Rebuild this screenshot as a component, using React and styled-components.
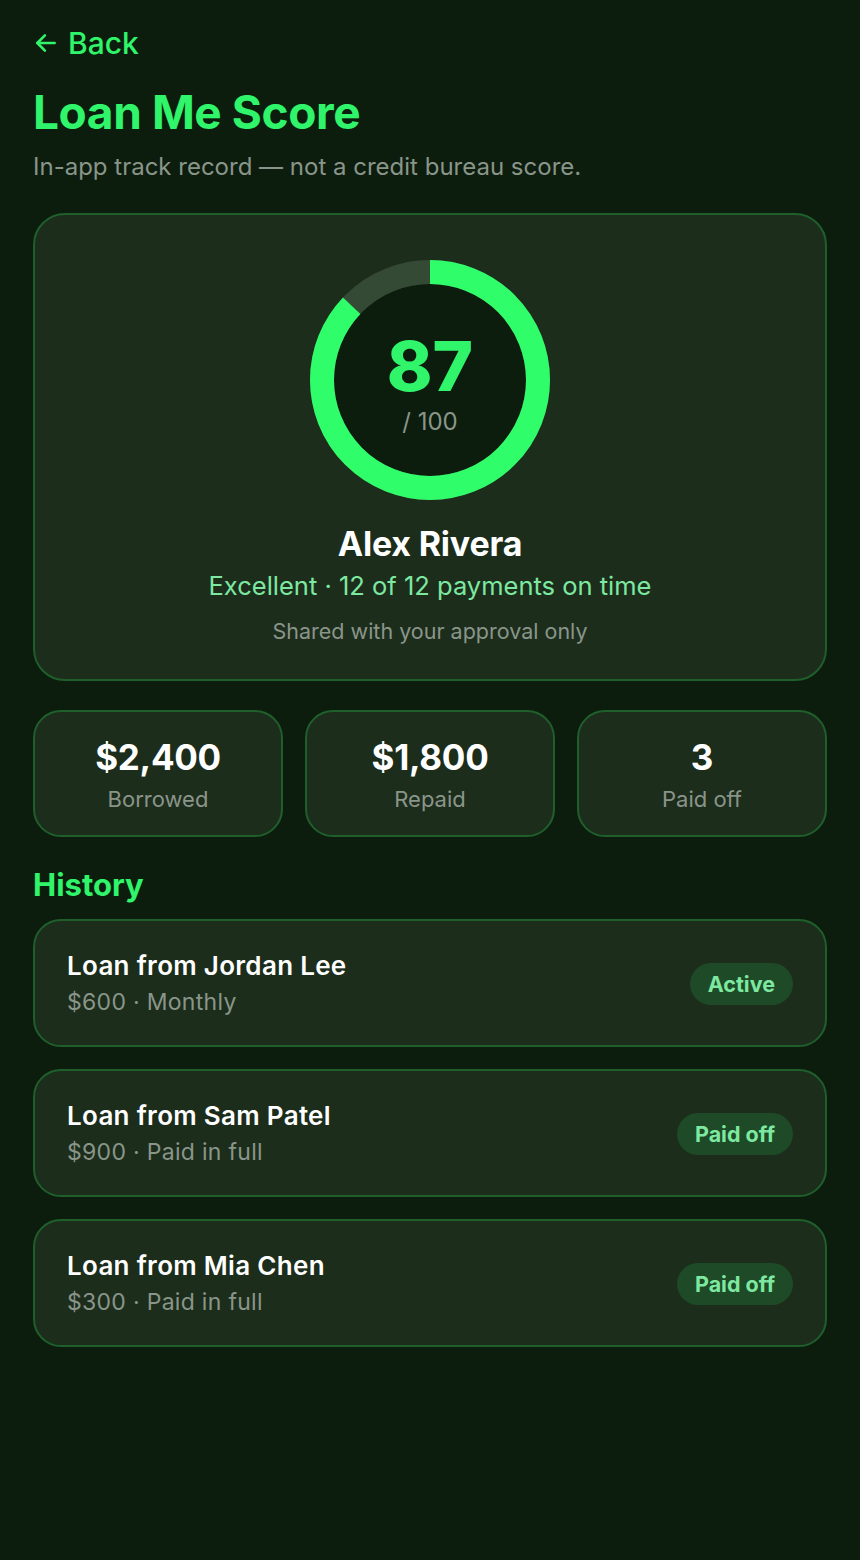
import React from "react";
import styled, { createGlobalStyle } from "styled-components";

const GlobalStyle = createGlobalStyle`
  html, body { margin: 0; padding: 0; background: #0c1d0e; }
  body { font-family: Inter, "Noto Sans", sans-serif; -webkit-font-smoothing: antialiased; }
  * { box-sizing: border-box; }
`;

const Page = styled.div`
  min-height: 1560px;
  background: #0c1d0e;
  padding: 26px 33px 40px;
  display: flex;
  flex-direction: column;
`;

const BackLink = styled.a`
  display: flex;
  align-items: center;
  gap: 9px;
  color: #30f46a;
  font-size: 30px;
  font-weight: 500;
  text-decoration: none;
  height: 34px;
`;

const Title = styled.h1`
  margin: 24px 0 0;
  color: #30f46a;
  font-size: 46px;
  font-weight: 700;
  letter-spacing: -0.4px;
  line-height: 56px;
`;

const Subtitle = styled.p`
  margin: 12px 0 0;
  color: #8a958a;
  font-size: 24px;
  line-height: 30px;
`;

const Card = styled.div`
  background: #1c2d1c;
  border: 2px solid #1f5f2b;
  border-radius: 32px;
`;

const ScoreCard = styled(Card)`
  margin-top: 31px;
  padding: 45px 24px 34px;
  display: flex;
  flex-direction: column;
  align-items: center;
`;

const RingWrap = styled.div`
  position: relative;
  width: 240px;
  height: 240px;
`;

const RingCenter = styled.div`
  position: absolute;
  inset: 0;
  display: flex;
  flex-direction: column;
  align-items: center;
  justify-content: center;
`;

const ScoreNum = styled.div`
  color: #30f46a;
  font-size: 69px;
  font-weight: 800;
  line-height: 84px;
`;

const ScoreMax = styled.div`
  color: #8a958a;
  font-size: 24px;
  line-height: 28px;
`;

const Name = styled.div`
  margin-top: 24px;
  color: #ffffff;
  font-size: 34px;
  font-weight: 700;
  letter-spacing: -0.2px;
  line-height: 40px;
`;

const Status = styled.div`
  margin-top: 5px;
  color: #7de8a0;
  font-size: 25.5px;
  line-height: 34px;
`;

const Note = styled.div`
  margin-top: 14px;
  color: #8a958a;
  font-size: 21.5px;
  line-height: 28px;
`;

const StatsRow = styled.div`
  margin-top: 29px;
  display: grid;
  grid-template-columns: repeat(3, 1fr);
  gap: 22px;
`;

const StatCard = styled(Card)`
  height: 127px;
  border-radius: 28px;
  display: flex;
  flex-direction: column;
  align-items: center;
  justify-content: center;
  padding-top: 2px;
`;

const StatValue = styled.div`
  color: #ffffff;
  font-size: 35px;
  font-weight: 700;
  line-height: 42px;
  letter-spacing: -0.3px;
`;

const StatLabel = styled.div`
  margin-top: 6px;
  color: #8a958a;
  font-size: 22px;
  line-height: 30px;
`;

const SectionTitle = styled.h2`
  margin: 28px 0 0;
  color: #30f46a;
  font-size: 31px;
  font-weight: 700;
  line-height: 40px;
`;

const List = styled.div`
  margin-top: 14px;
  display: flex;
  flex-direction: column;
  gap: 22px;
`;

const Row = styled(Card)`
  height: 128px;
  flex: 0 0 128px;
  border-radius: 28px;
  padding: 0 32px;
  display: flex;
  align-items: center;
  justify-content: space-between;
`;

const RowText = styled.div`
  display: flex;
  flex-direction: column;
  gap: 5px;
`;

const RowTitle = styled.div`
  color: #ffffff;
  font-size: 26px;
  font-weight: 600;
  letter-spacing: 0.3px;
  line-height: 32px;
`;

const RowSub = styled.div`
  color: #8a958a;
  font-size: 23px;
  letter-spacing: 0.3px;
  line-height: 30px;
`;

const Badge = styled.span`
  background: #1e4a27;
  color: #7de8a0;
  font-size: 21.5px;
  font-weight: 700;
  padding: 0 18px;
  height: 42px;
  border-radius: 21px;
  display: inline-flex;
  align-items: center;
  margin-top: 2px;
`;

function Ring({ value }) {
  const r = 108;
  const c = 2 * Math.PI * r;
  return (
    <svg width="240" height="240" viewBox="0 0 240 240">
      <circle cx="120" cy="120" r="96" fill="#0c1d0e" />
      <circle cx="120" cy="120" r={r} fill="none" stroke="#354a35" strokeWidth="24" />
      <circle
        cx="120"
        cy="120"
        r={r}
        fill="none"
        stroke="#30fd6a"
        strokeWidth="24"
        strokeDasharray={`${(c * value) / 100} ${c}`}
        transform="rotate(-90 120 120)"
      />
    </svg>
  );
}

const loans = [
  { title: "Loan from Jordan Lee", sub: "$600 · Monthly", badge: "Active" },
  { title: "Loan from Sam Patel", sub: "$900 · Paid in full", badge: "Paid off" },
  { title: "Loan from Mia Chen", sub: "$300 · Paid in full", badge: "Paid off" },
];

const stats = [
  { value: "$2,400", label: "Borrowed" },
  { value: "$1,800", label: "Repaid" },
  { value: "3", label: "Paid off" },
];

export default function App() {
  return (
    <>
      <GlobalStyle />
      <Page>
        <BackLink href="#">
          <svg width="26" height="26" viewBox="0 0 24 24" fill="none" stroke="#30f46a" strokeWidth="2.4" strokeLinecap="round" strokeLinejoin="round">
            <path d="M20 12H4" />
            <path d="M11 5l-7 7 7 7" />
          </svg>
          Back
        </BackLink>
        <Title>Loan Me Score</Title>
        <Subtitle>In-app track record — not a credit bureau score.</Subtitle>

        <ScoreCard>
          <RingWrap>
            <Ring value={87} />
            <RingCenter>
              <ScoreNum>87</ScoreNum>
              <ScoreMax>/ 100</ScoreMax>
            </RingCenter>
          </RingWrap>
          <Name>Alex Rivera</Name>
          <Status>Excellent · 12 of 12 payments on time</Status>
          <Note>Shared with your approval only</Note>
        </ScoreCard>

        <StatsRow>
          {stats.map((s) => (
            <StatCard key={s.label}>
              <StatValue>{s.value}</StatValue>
              <StatLabel>{s.label}</StatLabel>
            </StatCard>
          ))}
        </StatsRow>

        <SectionTitle>History</SectionTitle>
        <List>
          {loans.map((l) => (
            <Row key={l.title}>
              <RowText>
                <RowTitle>{l.title}</RowTitle>
                <RowSub>{l.sub}</RowSub>
              </RowText>
              <Badge>{l.badge}</Badge>
            </Row>
          ))}
        </List>
      </Page>
    </>
  );
}
